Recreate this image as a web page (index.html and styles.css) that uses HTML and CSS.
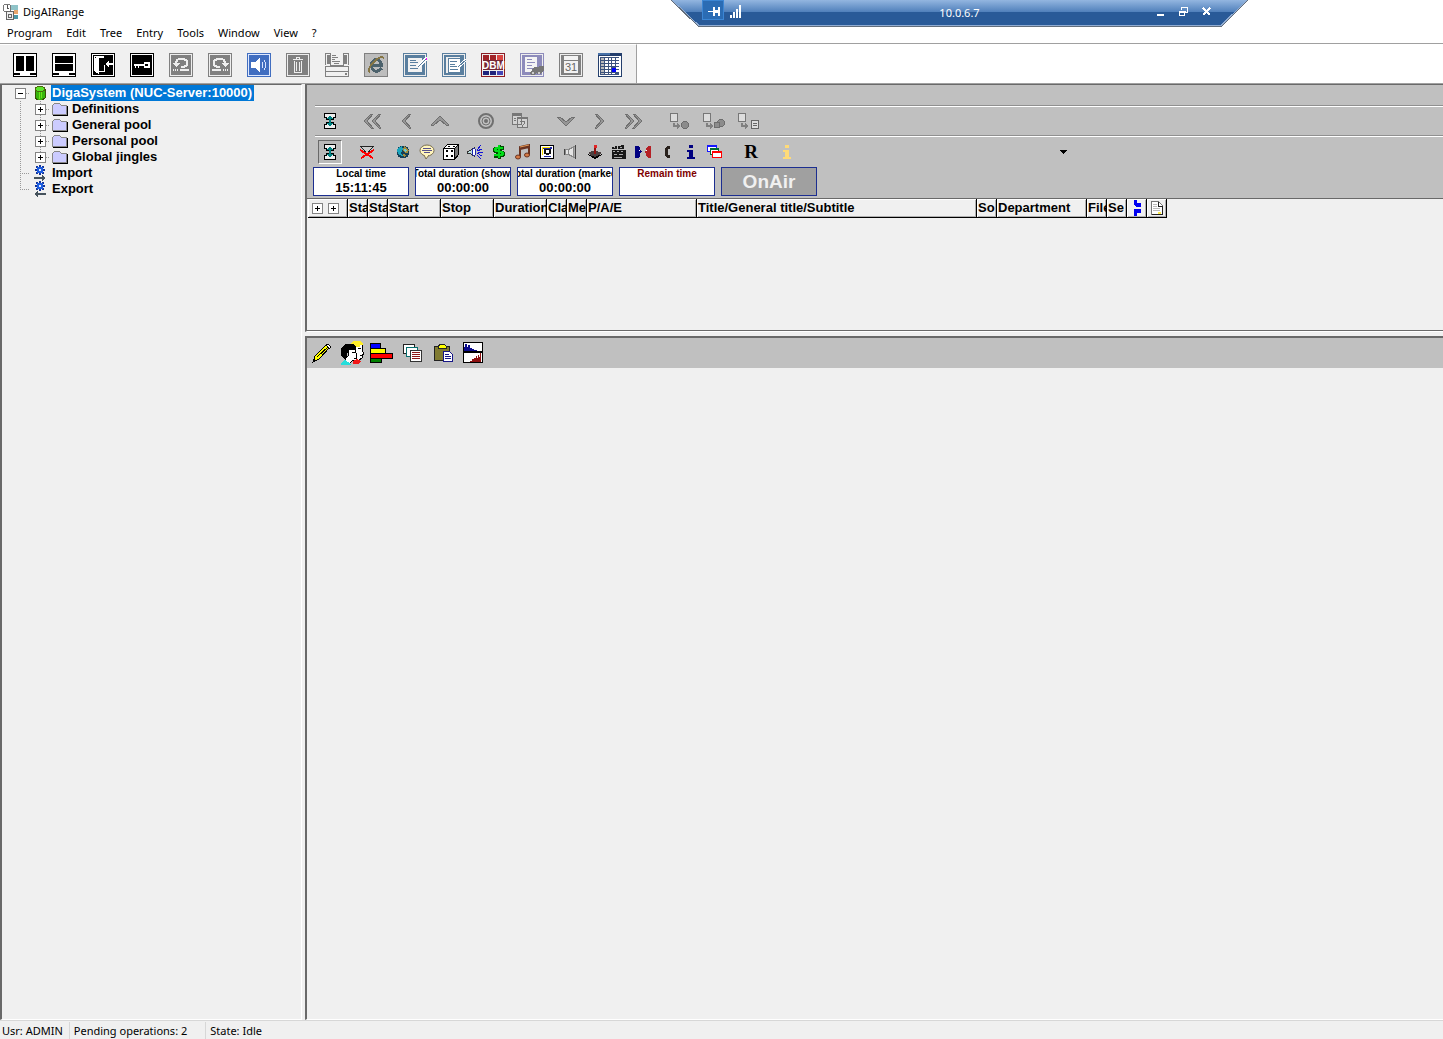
FILE: index.html
```html
<!DOCTYPE html>
<html lang="en">
<head>
<meta charset="utf-8">
<title>DigAIRange</title>
<link rel="stylesheet" href="styles.css">
</head>
<body>
<div class="app">
  <header class="titlebar">
    <svg class="app-icon" width="18" height="18" viewBox="0 0 18 18"><rect x="9" y="2" width="7" height="5" fill="#8fc3c8"/><rect x="12" y="7" width="4" height="4" fill="#e8a56c"/><rect x="12" y="12" width="4" height="4" fill="#4b97a8"/><circle cx="5" cy="5" r="4" fill="#fff" stroke="#777"/><path d="M5 2v3h2" fill="none" stroke="#555"/><path d="M4.500 8.500h7v8h-7zM6.500 11.500h3v3h-3z" fill="#eee" stroke="#666"/></svg>
    <span>DigAIRange</span>
  </header>
  <div class="remote">
    <svg class="remote-bg" width="577" height="27" viewBox="0 0 577 27"><defs><linearGradient id="blue" x1="0" y1="0" x2="0" y2="1"><stop offset="0" stop-color="#93b6e0"/><stop offset=".46" stop-color="#5080bb"/><stop offset=".46" stop-color="#295a98"/><stop offset="1" stop-color="#295a98"/></linearGradient></defs><path d="M0 0h577l-27 26H28z" fill="url(#blue)"/><path d="M1 0l27 25.500h522L576 0" fill="none" stroke="#90acd3"/><path d="M0 0l27.500 26.500h523L577 0" fill="none" stroke="#626e7c"/></svg>
    <button class="rbtn pin" aria-label="Pin"><svg width="22" height="20" viewBox="0 0 22 20"><path d="M6 11h5V7h2v3h3V7h2v9h-2v-3h-3v3h-2v-4H6z" fill="#fff"/></svg></button>
    <svg width="12" height="13" viewBox="0 0 12 13"><path d="M0 10h2v3H0zM3 7h2v6H3zM6 4h2v9H6zM9 0h2v13H9z" fill="#fff"/></svg>
    <span class="remote-host">10.0.6.7</span>
    <button class="rbtn" aria-label="Minimize"><svg width="11" height="12" viewBox="0 0 11 12"><path d="M2 8h7v2H2z" fill="#fff"/></svg></button>
    <button class="rbtn" aria-label="Restore"><svg width="11" height="12" viewBox="0 0 11 12"><path d="M3.500 4V1.500h6v5H8M1 5h6v1H1zM1.500 5.500h5v4h-5z" fill="none" stroke="#fff"/></svg></button>
    <button class="rbtn" aria-label="Close"><svg width="11" height="12" viewBox="0 0 11 12"><path d="M2 2l7 7M9 2L2 9" stroke="#fff" stroke-width="2"/></svg></button>
  </div>
  <nav class="menubar">
    <button>Program</button><button>Edit</button><button>Tree</button><button>Entry</button><button>Tools</button><button>Window</button><button>View</button><button>?</button>
  </nav>
  <div class="main-tools">
    <div class="main-tools-band">
      <button aria-label="Split vertical"><svg viewBox="0 0 24 24"><path d="M0 0h24v24H0z"/><path d="M1 1h22v22H1z" fill="#fff"/><path d="M3 3h8v15H3zM13 3h8v15h-8zM1 20h6v2H1zM17 20h6v2h-6z"/></svg></button>
      <button aria-label="Split horizontal"><svg viewBox="0 0 24 24"><path d="M0 0h24v24H0z"/><path d="M1 1h22v22H1z" fill="#fff"/><path d="M3 3h18v7H3zM3 11h18v7H3zM1 20h6v2H1zM17 20h6v2h-6z"/></svg></button>
      <button aria-label="Log off"><svg viewBox="0 0 24 24"><path d="M0 0h24v24H0z"/><path d="M1.500 1.500h21v21h-21z" stroke="#fff"/><path d="M3 3h10v2H8v13h5v-6h1v7H8v2l-5-3z" fill="#fff"/><path d="M4 4l4 2v13l-4-2z"/><path d="M3 4l5 2v13l-5-2zM22 10v2h-4v3l-4-4 4-4v3z" fill="#fff"/></svg></button>
      <button aria-label="Access key"><svg viewBox="0 0 24 24"><path d="M0 0h24v24H0z"/><path d="M1.500 1.500h21v21h-21z" stroke="#fff"/><path d="M4 11h10V9h6v6h-6v-2H9v2H8v-2H6v2H5v-2H4z" fill="#fff"/><path d="M15 11h3v2h-3z"/></svg></button>
      <button aria-label="Undo"><svg viewBox="0 0 24 24"><path d="M0 0h24v24H0z" fill="#808080"/><path d="M1.500 1.500h21v21h-21z" fill="none" stroke="#eee"/><path d="M7 10l1-3 2-1h5l3 2v4l-3 2h-3" fill="none" stroke="#eee" stroke-width="2"/><path d="M3 10h8l-4 4zM11 16h9v2h-9zM4 16h1v2H4zM6 16h1v2H6zM8 16h1v2H8z" fill="#eee"/></svg></button>
      <button aria-label="Redo"><svg viewBox="0 0 24 24"><path d="M0 0h24v24H0z" fill="#808080"/><path d="M1.500 1.500h21v21h-21z" fill="none" stroke="#eee"/><path d="M17 10l-1-3-2-1H9L6 8v4l3 2h3" fill="none" stroke="#eee" stroke-width="2"/><path d="M21 10h-8l4 4zM4 16h9v2H4zM15 16h1v2h-1zM17 16h1v2h-1zM19 16h1v2h-1z" fill="#eee"/></svg></button>
      <button aria-label="Sound"><svg viewBox="0 0 24 24"><path d="M0 0h24v24H0z" fill="#416ec0"/><path d="M1.500 1.500h21v21h-21z" fill="none" stroke="#dfe9ff"/><path d="M4 9h4l5-4v14l-5-4H4z" fill="#fff"/><path d="M15 9q2 3 0 6M17 7q4 5 0 10" fill="none" stroke="#d8e4ff"/></svg></button>
      <button aria-label="Delete"><svg viewBox="0 0 24 24"><path d="M0 0h24v24H0z" fill="#808080"/><path d="M1.500 1.500h21v21h-21z" fill="none" stroke="#eee"/><path d="M7 6.500h10M10.500 6V4.500h3V6M8.500 8v11.500h7V8M10.500 9v9M13.500 9v9" fill="none" stroke="#eee"/></svg></button>
      <button aria-label="Print"><svg viewBox="0 0 24 24"><path d="M0 0h24v24H0z" fill="#f0f0f0"/><path d="M.5 11.500V.5h5v11M23.500 11.500V.5h-5v11M5 12.500h14M.5 13.500h23v10H.5zM1 18.500h22" fill="none" stroke="#808080"/><path d="M2 2h3v9H2zM19 2h3v9h-3zM7 2h4v1H7zM7 4h6v1H7zM7 6h3v1H7zM7 8h8v1H7zM9 10h5v1H9zM20 20h2v2h-2z" fill="#808080"/></svg></button>
      <button aria-label="Browser"><svg viewBox="0 0 24 24"><path d="M.5.5h23v23H.5z" fill="#bdbdbd" stroke="#808080"/><path d="M17.500 15.500Q12 21 8.500 16t2-9q5-3 7 5H7.500" fill="none" stroke="#4c626c" stroke-width="3"/><path d="M6 20q-3-3 2-9 8-9 12-6" fill="none" stroke="#857544" stroke-width="2"/></svg></button>
      <button aria-label="Edit entry"><svg viewBox="0 0 24 24"><path d="M0 0h24v24H0z" fill="#5a7f9f"/><path d="M1.500 1.500h21v21h-21z" fill="none" stroke="#eee"/><path d="M5 5h14v14H5z" fill="#f2f2f2"/><path d="M7 7.500h6m-6 2h8m-8 3h6m-6 3h8" stroke="#5a7f9f"/><path d="M15 14l9-9" stroke="#fff" stroke-width="3"/><path d="M15 14l8-8" stroke="#5a7f9f"/><path d="M23 5h1v2h-1z" fill="#f0f"/></svg></button>
      <button aria-label="Edit entries"><svg viewBox="0 0 24 24"><path d="M0 0h24v24H0z" fill="#5a7f9f"/><path d="M1.500 1.500h21v21h-21z" fill="none" stroke="#eee"/><path d="M4 4h14v16H4z" fill="#eee"/><path d="M6.500 5.500h12v14h-12z" fill="#fff" stroke="#5a7f9f"/><path d="M8 8.500h7m-7 3h5m-5 2h7m-7 3h8" stroke="#5a7f9f"/><path d="M16 14l8-7" stroke="#fff" stroke-width="3"/><path d="M16 14l8-7" stroke="#5a7f9f"/></svg></button>
      <button aria-label="Database manager"><svg viewBox="0 0 24 24"><path d="M.5.5h23v23H.5z" fill="#eee" stroke="#8b1c24"/><path d="M2 2h6v5H2zM9 2h6v5H9z" fill="#a12328"/><path d="M16 2h6v5h-6z" fill="#db4643"/><path d="M2 7h20v10H2z" fill="#762736"/><path d="M2 18h6v4H2zM9 18h6v4H9z" fill="#20247c"/><path d="M16 18h6v4h-6z" fill="#4546b5"/><text class="dbm" x="1" y="16">DBM</text></svg></button>
      <button aria-label="Search"><svg viewBox="0 0 24 24"><path d="M0 0h24v24H0z" fill="#8d8bbb"/><path d="M1.500 1.500h21v21h-21z" fill="none" stroke="#eee"/><path d="M5 4h12v15H5z" fill="#f4f4f4"/><path d="M7 6.500h5m-5 3h8m-8 3h5m-5 3h6" stroke="#8d8bbb"/><path d="M10 20l4-6h4l2-1h4v4l-3 4h-3l-2-1-2 2h-3z" fill="#777"/><path d="M12 19h2v2h-2zM18 19h2v2h-2z" fill="#ccc"/></svg></button>
      <button aria-label="Calendar day"><svg viewBox="0 0 24 24"><path d="M0 0h24v24H0z" fill="#808080"/><path d="M1.500 1.500h21v21h-21z" fill="none" stroke="#eee"/><path d="M5 3h14v4H5zM5 8h14v12H5z" fill="#f2f2f2"/><text class="day" x="6" y="18">31</text></svg></button>
      <button aria-label="Calendar month"><svg viewBox="0 0 25 24"><path d="M0 0h25v24H0z" fill="#243f6d"/><path d="M1 3h23v20H1z" fill="#fff"/><path d="M0 0h12v2H0z" fill="#4872a8"/><path d="M2 4h20v18H2z" fill="#3c527c"/><path d="M3 5h3v2H3zM3 8h3v2H3zM3 11h3v2H3zM3 14h3v2H3zM3 17h3v2H3zM3 20h3v1H3z" fill="#bbb"/><path d="M7 5h3v2H7zM11 5h3v2h-3zM15 5h3v2h-3zM19 5h3v2h-3zM7 8h3v2H7zM11 8h3v2h-3zM15 8h3v2h-3zM19 8h3v2h-3zM7 11h3v2H7zM11 11h3v2h-3zM15 11h3v2h-3zM19 11h3v2h-3zM7 14h3v2H7zM11 14h3v2h-3zM19 14h3v2h-3zM7 17h3v2H7zM11 17h3v2h-3zM19 17h3v2h-3zM7 20h3v1H7zM11 20h3v1h-3zM15 20h3v1h-3z" fill="#fff"/><path d="M15 15h4v4h-4z" fill="#00f"/></svg></button>
    </div>
  </div>

  <div class="workspace">
    <aside class="tree-pane">
      <ul class="tree">
        <li>
          <div class="node"><span class="cell root-cell"><button class="expander minus" aria-label="Collapse"></button></span><span class="cell"><svg width="12" height="14" viewBox="0 0 12 14"><path d="M1 3v9l3 2h4l3-2V3z" fill="#38b50c" stroke="#385006"/><path d="M5 5v8M7 5v7" stroke="#6fe31c"/><ellipse cx="6" cy="3" rx="5" ry="2.500" fill="#5be52b" stroke="#4a680a"/></svg></span><span class="label selected">DigaSystem (NUC-Server:10000)</span></div>
          <ul>
            <li class="node"><span class="cell trunk"></span><span class="cell trunk branch"><button class="expander" aria-label="Expand"></button></span><span class="cell"><svg width="16" height="13" viewBox="0 0 16 13"><path d="M.5 11.500v-9l2-2h5l2 2h5v9z" fill="#ccccff" stroke="#888"/><path d="M1 12.500h14.500V3" fill="none" stroke="#000"/></svg></span><span class="label">Definitions</span></li>
            <li class="node"><span class="cell trunk"></span><span class="cell trunk branch"><button class="expander" aria-label="Expand"></button></span><span class="cell"><svg width="16" height="13" viewBox="0 0 16 13"><path d="M.5 11.500v-9l2-2h5l2 2h5v9z" fill="#ccccff" stroke="#888"/><path d="M1 12.500h14.500V3" fill="none" stroke="#000"/></svg></span><span class="label">General pool</span></li>
            <li class="node"><span class="cell trunk"></span><span class="cell trunk branch"><button class="expander" aria-label="Expand"></button></span><span class="cell"><svg width="16" height="13" viewBox="0 0 16 13"><path d="M.5 11.500v-9l2-2h5l2 2h5v9z" fill="#ccccff" stroke="#888"/><path d="M1 12.500h14.500V3" fill="none" stroke="#000"/></svg></span><span class="label">Personal pool</span></li>
            <li class="node"><span class="cell trunk"></span><span class="cell trunk branch last"><button class="expander" aria-label="Expand"></button></span><span class="cell"><svg width="16" height="13" viewBox="0 0 16 13"><path d="M.5 11.500v-9l2-2h5l2 2h5v9z" fill="#ccccff" stroke="#888"/><path d="M1 12.500h14.500V3" fill="none" stroke="#000"/></svg></span><span class="label">Global jingles</span></li>
          </ul>
        </li>
        <li class="node"><span class="cell trunk branch"></span><span class="cell"><svg width="12" height="16" viewBox="0 0 12 16"><path d="M5 0h2v10H5zM1 4h10v2H1zM2 1h2v2H2zM8 1h2v2H8zM2 7h2v2H2zM8 7h2v2H8z" fill="#12349a"/><path d="M3 2h6v6H3z" fill="#1c5ce0"/><path d="M5 4h2v2H5z" fill="#e4f0ff"/><path d="M0 12h8v-2l4 3-4 3v-2H0z" fill="#45525c"/></svg></span><span class="label">Import</span></li>
        <li class="node"><span class="cell trunk branch last"></span><span class="cell"><svg width="12" height="16" viewBox="0 0 12 16"><path d="M5 0h2v10H5zM1 4h10v2H1zM2 1h2v2H2zM8 1h2v2H8zM2 7h2v2H2zM8 7h2v2H8z" fill="#12349a"/><path d="M3 2h6v6H3z" fill="#1c5ce0"/><path d="M5 4h2v2H5z" fill="#e4f0ff"/><path d="M12 12H4v-2l-4 3 4 3v-2h8z" fill="#45525c"/></svg></span><span class="label">Export</span></li>
      </ul>
    </aside>

    <main class="content">
      <section class="pane show-pane">
        <div class="caption-strip"></div>
        <div class="tool-row nav-row">
          <div class="group"><button class="small" aria-label="Fit"><svg width="12" height="16" viewBox="0 0 12 16"><path d="M.5.500h11v4h-2v2h-7v-2h-2zM.5 15.500h11v-4h-2v-2h-7v2h-2z" fill="#eee" stroke="#000"/><path d="M5 3h2v10H5zM4 4h4v1H4zM3 5h6v1H3zM3 10h6v1H3zM4 11h4v1H4z" fill="#008080"/></svg></button></div>
          <div class="group">
            <button aria-label="First"><svg width="18" height="16" viewBox="0 0 18 16"><path d="M8 1h2L4 8l6 7H8L1 8zM16 1h2l-6 7 6 7h-2L9 8z" class="dim"/></svg></button>
            <button aria-label="Previous"><svg width="10" height="16" viewBox="0 0 10 16"><path d="M8 1h2L4 8l6 7H8L1 8z" class="dim"/></svg></button>
            <button aria-label="Up"><svg width="18" height="10" viewBox="0 0 18 10"><path d="M9 0l9 9h-3L9 4 3 9H0z" class="dim"/></svg></button>
          </div>
          <div class="group">
            <button aria-label="Target"><svg class="smooth" width="16" height="16" viewBox="0 0 16 16"><circle cx="8" cy="8" r="7" fill="none" stroke="#707070" stroke-width="2"/><circle cx="8" cy="8" r="4" fill="none" stroke="#707070" stroke-width="1"/><circle cx="8" cy="8" r="2" fill="#707070"/></svg></button>
            <button aria-label="Date"><svg width="16" height="16" viewBox="0 0 16 16"><path d="M.5.500h9v11h-9zM5.500 4.500h10v10h-10z" fill="#d2d2d2" stroke="#777"/><path d="M0 0h10v3H0zM5 4h11v2H5z" fill="#777"/><path d="M8 8.500h4.500v2l-2 2v1M2 5.500h2m-2 2h2" fill="none" stroke="#777"/></svg></button>
          </div>
          <div class="group">
            <button aria-label="Down"><svg width="18" height="10" viewBox="0 0 18 10"><path d="M9 10l9-9h-3L9 6 3 1H0z" class="dim"/></svg></button>
            <button aria-label="Next"><svg width="10" height="16" viewBox="0 0 10 16"><path d="M2 1H0l6 7-6 7h2l7-7z" class="dim"/></svg></button>
            <button aria-label="Last"><svg width="18" height="16" viewBox="0 0 18 16"><path d="M2 1H0l6 7-6 7h2l7-7zM10 1H8l6 7-6 7h2l7-7z" class="dim"/></svg></button>
          </div>
          <div class="group">
            <button aria-label="Insert one"><svg width="20" height="16" viewBox="0 0 20 16"><path d="M.5.500h7v8h-7z" fill="#ddd" stroke="#777"/><path d="M3 10v4h4v2l3-3-3-3v2H5v-2z" fill="#808080"/><circle cx="15" cy="12" r="3.500" fill="#8c8c8c" stroke="#6d6d6d"/></svg></button>
            <button aria-label="Insert several"><svg width="22" height="16" viewBox="0 0 22 16"><path d="M.5.500h7v8h-7z" fill="#ddd" stroke="#777"/><path d="M3 10v4h4v2l3-3-3-3v2H5v-2z" fill="#808080"/><circle cx="18" cy="10" r="3.500" fill="#8c8c8c" stroke="#6d6d6d"/><circle cx="14" cy="12" r="3" fill="#8c8c8c" stroke="#6d6d6d"/></svg></button>
            <button aria-label="Insert list"><svg width="21" height="16" viewBox="0 0 21 16"><path d="M.5.500h7v8h-7z" fill="#ddd" stroke="#777"/><path d="M3 10v4h4v2l3-3-3-3v2H5v-2z" fill="#808080"/><path d="M13.500 7.500h7v8h-7z" fill="#ddd" stroke="#666"/><path d="M15 10.500h4m-4 2h4" stroke="#666"/></svg></button>
          </div>
        </div>
        <div class="tool-row filter-row">
          <div class="group"><button class="small pressed" aria-label="Fit"><svg width="12" height="16" viewBox="0 0 12 16"><path d="M.5.500h11v4h-2v2h-7v-2h-2zM.5 15.500h11v-4h-2v-2h-7v2h-2z" fill="#eee" stroke="#000"/><path d="M5 3h2v10H5zM4 4h4v1H4zM3 5h6v1H3zM3 10h6v1H3zM4 11h4v1H4z" fill="#008080"/></svg></button></div>
          <div class="group"><button class="small" aria-label="Clear filter"><svg width="14" height="16" viewBox="0 0 14 16"><path d="M1 2.500h12L8.500 8v3h-3V8z" fill="#ccc" stroke="#222"/><path d="M0 6l13 8M14 6L1 14" stroke="#f00" stroke-width="2"/></svg></button></div>
          <div class="group">
            <button class="small" aria-label="World"><svg width="14" height="14" viewBox="0 0 14 14"><circle cx="7" cy="7" r="6.500" fill="#154058"/><path d="M2 3l4-2 1 3-2 4 2 3-4-1-2-4z" fill="#1aa3bb"/><path d="M8 1l5 4-1 3H9L7 6zM7 9l3 1-2 3z" fill="#a48c39"/><path d="M8 4l3 1-2 2z" fill="#6bcad6"/></svg></button>
            <button class="small" aria-label="Speech"><svg class="smooth" width="16" height="16" viewBox="0 0 16 16"><ellipse cx="8" cy="6.500" rx="7" ry="5.500" fill="#fff5bd" stroke="#796d51"/><path d="M5 11l2 4 3-4" fill="#fff5bd" stroke="#796d51"/><path d="M4 4.500h8M3 6.500h10M5 8.500h6" stroke="#56508c"/></svg></button>
            <button class="small" aria-label="Dice"><svg width="16" height="16" viewBox="0 0 16 16"><path d="M.5 4.500l4-4h11v10l-4 5H.5z" fill="#fff" stroke="#000"/><path d="M12 5l3-4v9l-3 4z" fill="#777"/><path d="M1 4.500h10.500V15M11.500 4.500l4-4" fill="none" stroke="#000"/><path d="M3 6h2v2H3zM8 6h2v2H8zM3 11h2v2H3zM8 11h2v2H8zM5 2h2v1H5zM10 2h2v1h-2z"/></svg></button>
            <button class="small" aria-label="Announcement"><svg width="16" height="14" viewBox="0 0 16 14"><path d="M0 6h2l5-3v8L2 8H0z" fill="#bdd" stroke="#333"/><ellipse cx="7" cy="7" rx="1.500" ry="4" fill="#fff" stroke="#222ab0"/><path d="M10 5l4-5M10 6l5-2M11 7h5M10 8l5 3M10 10l4 4" stroke="#1010d8"/></svg></button>
            <button class="small" aria-label="Commercial"><svg width="12" height="16" viewBox="0 0 12 16"><path d="M5 1h3v1h3v4H9v1h2v1h1v4h-1v1H8v2H5v-1H1v-4h2V9H1V8H0V4h1V3h4z" fill="#004b00"/><path d="M5 1h2v2h3v2H7v2h3v1h1v3h-1v1H7v2H5v-2H1v-2h4V8H2V7H1V4h1V3h3z" fill="#00dc18"/><path d="M4 5h1v1H4zM7 9h1v1H7z" fill="#004b00"/></svg></button>
            <button class="small" aria-label="Music"><svg class="smooth" width="16" height="16" viewBox="0 0 16 16"><path d="M5 13V3l9-2v10M5 5l9-2" fill="none" stroke="#693321" stroke-width="2"/><path d="M5 3l9-2" stroke="#e69a56"/><ellipse cx="3" cy="13" rx="2.500" ry="2" fill="#d67b45" stroke="#693321"/><ellipse cx="12" cy="11" rx="2.500" ry="2" fill="#d67b45" stroke="#693321"/></svg></button>
            <button class="small" aria-label="Video"><svg width="14" height="14" viewBox="0 0 14 14"><path d="M0 0h14v14H0z"/><path d="M1 1h12v12H1z" fill="#fff"/><path d="M2 2h10v2H2z" fill="#1e28a0"/><path d="M2 2h8v1H3v7H2z" fill="#ffe000"/><path d="M4 4h7v5H9v1H6V9H4z" fill="#111"/><path d="M6 5h3v3H6z" fill="#fff"/><path d="M4 11h7v1H4z" fill="#1e28a0"/></svg></button>
            <button class="small" aria-label="Speaker"><svg width="14" height="16" viewBox="0 0 14 16"><path d="M1 5h3l8-4v14L4 11H1z" fill="#888"/><path d="M2 6h2v4H2zM5 6l4-2v8L5 10z" fill="#e4e4e4"/><path d="M11 1h1v14h-1zM0 5h1v6H0z" fill="#444"/><path d="M10 3v10" stroke="#aaa"/></svg></button>
            <button class="small" aria-label="Joystick"><svg width="14" height="16" viewBox="0 0 14 16"><path d="M0 9l7-3 7 3-7 5z" fill="#4a4040"/><path d="M0 10l7 3 7-3v1l-7 4-7-4z" fill="#000"/><path d="M7 3v7" stroke="#8e1310" stroke-width="2"/><path d="M6 1h3v3H6z" fill="#e12525"/></svg></button>
            <button class="small" aria-label="Camera"><svg width="14" height="14" viewBox="0 0 14 14"><path d="M0 5h14v9H0zM0 2l5-1v3H0zM6 1l6-1v4H6z" fill="#181818"/><path d="M1 6h2v1H1zM5 6h2v1H5zM9 6h2v1H9zM2 9h3v1H2zM7 9h4v1H7zM2 12h8v1H2zM2 2h1v1H2zM8 2h2v1H8z" fill="#aaa"/></svg></button>
            <button class="small" aria-label="Interview"><svg width="16" height="14" viewBox="0 0 16 14"><path d="M0 1h3l2 2v2l2 2-2 1v3l-2 2H0z" fill="#000080"/><path d="M16 1h-3l-2 2v2L9 7l2 1v3l2 2h3z" fill="#b52025"/><path d="M4 5h1v1H4zM11 5h1v1h-1z" fill="#fff"/></svg></button>
            <button class="small" aria-label="Phone"><svg width="6" height="14" viewBox="0 0 6 14"><path d="M3 1h3v3H4v6h2v3H3l-2-3V4z" fill="#28211c"/></svg></button>
            <button class="small" aria-label="Info"><svg width="10" height="14" viewBox="0 0 10 14"><path d="M3 0h4v3H3zM1 5h6v7h2v2H1v-2h2V7H1z" fill="#000080"/></svg></button>
            <button class="small" aria-label="Windows"><svg width="16" height="14" viewBox="0 0 16 14"><path d="M.5.500h9v6h-9z" fill="#fff" stroke="#1616ff"/><path d="M0 0h10v2H0z" fill="#1616ff"/><path d="M3.500 3.500h8v6h-8z" fill="#fff" stroke="#006c32"/><path d="M3 3h9v2H3z" fill="#006c32"/><path d="M5.500 6.500h9v6h-9z" fill="#fff" stroke="#f00"/><path d="M5 6h10v2H5z" fill="#f00"/></svg></button>
          </div>
          <div class="group"><button class="small letter">R</button></div>
          <div class="group"><button class="small" aria-label="Details"><svg width="10" height="14" viewBox="0 0 10 14"><path d="M3 0h4v3H3zM1 5h6v7h2v2H1v-2h2V7H1z" fill="#ffdb78"/></svg></button></div>
          <div class="combo"><select aria-label="Filter"><option></option></select><svg width="8" height="4" viewBox="0 0 8 4"><path d="M0 0h8L4 4z"/></svg></div>
        </div>
        <div class="clocks">
          <div class="clock"><span>Local time</span><strong>15:11:45</strong></div>
          <div class="clock"><span>Total duration (show)</span><strong>00:00:00</strong></div>
          <div class="clock"><span>Total duration (marked)</span><strong>00:00:00</strong></div>
          <div class="clock remain"><span>Remain time</span></div>
          <button class="onair">OnAir</button>
        </div>
        <div class="list-area">
          <table class="list-head">
            <colgroup><col class="w40"><col class="w20"><col class="w20"><col class="w53"><col class="w53"><col class="w53"><col class="w20"><col class="w20"><col class="w110"><col class="w280"><col class="w20"><col class="w90"><col class="w20"><col class="w20"><col class="w20"><col class="w20"></colgroup>
            <thead><tr>
              <th><div class="expanders"><button class="expander" aria-label="Expand all"></button><button class="expander" aria-label="Expand level"></button></div></th>
              <th>Sta</th><th>Sta</th><th>Start</th><th>Stop</th><th>Duration</th><th>Cla</th><th>Me</th><th>P/A/E</th><th>Title/General title/Subtitle</th><th>So</th><th>Department</th><th>File</th><th>Se</th>
              <th aria-label="Link"><svg width="8" height="16" viewBox="0 0 8 16"><path d="M1 0h3v3h4v4H3L1 5zM1 9h7v4H4v3H1z" fill="#0000f0"/></svg></th>
              <th aria-label="Document"><svg width="12" height="14" viewBox="0 0 12 14"><path d="M.5.500h7l4 4v9H.500z" fill="#fff" stroke="#777"/><path d="M7.500 1v4h4v8.500H1" fill="none" stroke="#222"/><path d="M2 3.500h4M2 5.500h4M2 7.500h7M2 9.500h7" stroke="#bbb"/><path d="M7 11h3v2H7z" fill="#ffee4a"/></svg></th>
            </tr></thead>
          </table>
        </div>
      </section>

      <section class="pane detail-pane">
        <div class="detail-tools">
          <button aria-label="Edit"><svg width="20" height="20" viewBox="0 0 20 20"><path d="M1 19l2-6L15 1l3 3L7 16z" fill="#ff0" stroke="#000"/><path d="M14 2l2-1 3 3-2 2z" fill="#fff" stroke="#000"/><path d="M5 14L16 4" stroke="#000"/><path d="M2 16l2 2-3 1z"/></svg></button>
          <button aria-label="Persons"><svg width="24" height="24" viewBox="0 0 24 24"><path d="M13 2h8l2 3-1 4 2 4-2 1v3l-3 2h-5z" fill="#fff" stroke="#000"/><path d="M11 2l3-2h6l3 2v2h-3v2h-4l-2-2h-3z" fill="#ffee28"/><path d="M1 7l4-4h8l3 3v3H9l-2 4v5H4l-3-3z"/><path d="M9 8h6l1 4 1 2-1 2v3l-4 1-2 2H5v-4l3-3z" fill="#fff" stroke="#000"/><path d="M1 24v-2l4-3 5 3 1 2z" fill="#26dedb"/><path d="M13 20l4-2 4 2-2 3h-6z" fill="#f31919"/><path d="M18 7h3v1h-3zM12 11h3v1h-3zM14 17h2v1h-2zM20 14h2v1h-2z"/></svg></button>
          <button aria-label="Timeline"><svg width="24" height="22" viewBox="0 0 24 22"><path d="M.500 1.500h10v5H.500z" fill="#00f" stroke="#000"/><path d="M.500 6.500h15v5H.500z" fill="#ff0" stroke="#000"/><path d="M.500 11.500h22v5H.500z" fill="#f00" stroke="#000"/><path d="M.500 16.500h11v4H.500z" fill="#008000" stroke="#000"/></svg></button>
          <button aria-label="Copy"><svg width="19" height="18" viewBox="0 0 19 18"><path d="M.5.500h11v9H.5z" fill="#fff" stroke="#222"/><path d="M3.500 3.500h11v9h-11z" fill="#fff" stroke="#087070"/><path d="M7.500 6.500h11v11h-11z" fill="#fff" stroke="#333"/><path d="M9 8.500h8M9 10.500h8M9 12.500h8M9 14.500h8" stroke="#8e1717"/></svg></button>
          <button class="apart" aria-label="Paste"><svg width="20" height="20" viewBox="0 0 20 20"><path d="M.5 3.500h15v14H.5z" fill="#807b31" stroke="#222"/><path d="M4 5V3l3-2h3l2 2v2z" fill="#ff0" stroke="#222"/><path d="M9.500 8.500h6l3 3v7h-9z" fill="#fff" stroke="#171788"/><path d="M11 11.500h4m-4 2h6m-6 2h6" stroke="#171788"/></svg></button>
          <button aria-label="Waveform"><svg width="20" height="22" viewBox="0 0 20 22"><path d="M.500.500h19v20H.500z" fill="#fff" stroke="#000"/><path d="M0 10h20" stroke="#000" stroke-width="2"/><path d="M1 9V5h1V2h2v3h1V3h2v3h2v1h2v1h3v1z" fill="#0b0b8c"/><path d="M7 20v-1h2v-2h2v-1h2v-2h1v2h1v-3h1v2h1v-4h1v9z" fill="#8d1010"/></svg></button>
        </div>
      </section>
    </main>
  </div>

  <footer class="statusbar"><span>Usr: ADMIN</span><span>Pending operations: 2</span><span>State: Idle</span></footer>
</div>
</body>
</html>
```

FILE: styles.css
```css
* { box-sizing: border-box; }
body { margin: 0; background: #f0f0f0; color: #000; font: 11px/16px "Noto Sans", sans-serif; }
button { border: 0; padding: 0; margin: 0; background: none; font: inherit; color: inherit; display: flex; align-items: center; justify-content: center; }
svg { display: block; flex: none; shape-rendering: crispEdges; }
.smooth { shape-rendering: auto; }
ul { list-style: none; margin: 0; padding: 0; }

.app { position: relative; display: flex; flex-direction: column; min-height: 100vh; overflow: hidden; }

.titlebar { display: flex; align-items: center; gap: 3px; height: 24px; padding-left: 2px; background: #fff; }
.menubar { display: flex; height: 19px; padding-bottom: 1px; background: #fff; }
.menubar button { padding: 0 7px; }

/* Remote session bar floating over the title bar */
.remote { position: absolute; z-index: 1; top: 0; left: 671px; width: 577px; height: 27px; display: flex; align-items: center; padding: 0 36px 4px 31px; color: #fff; }
.remote-bg { position: absolute; inset: 0; z-index: -1; }
.pin { width: 22px; height: 20px; margin: 0 6px 4px 0; background: #2b6cb4; outline: 1px solid #3c86d4; outline-offset: -1px; }
.rbtn + .rbtn { margin-left: 12px; }
.remote-host { flex: 1; padding: 2px 0 0 22px; text-align: center; }

.main-tools { height: 41px; border-top: 1px solid #a0a0a0; border-bottom: 1px solid #a0a0a0; background: #fff; display: flex; }
.main-tools-band { display: flex; align-items: center; padding: 1px 7px 0 5px; background: #f0f0f0; border-top: 1px solid #fff; border-right: 1px solid #a0a0a0; }
.main-tools-band button { width: 39px; height: 24px; }
.main-tools-band svg { height: 24px; width: 24px; }
.dbm { font: bold 10px "Liberation Sans", Arial, sans-serif; fill: #fff; }
.day { font: 11px "Liberation Sans", Arial, sans-serif; fill: #666; }

.workspace { flex: 1; display: flex; gap: 3px; }

.tree-pane { width: 302px; border-left: 2px solid #696969; border-top: 1px solid #696969; border-right: 1px solid #fff; border-bottom: 1px solid #fff; font: bold 13px/16px "Liberation Sans", Arial, sans-serif; }
.tree { padding-left: 8px; }
.node { display: flex; height: 16px; }
.cell { width: 20px; display: flex; align-items: center; justify-content: center; }
.trunk { background: repeating-linear-gradient(#999 0 1px, transparent 1px 2px) 10px 0 / 1px 16px no-repeat; }
.branch { background: repeating-linear-gradient(#999 0 1px, transparent 1px 2px) 10px 0 / 1px 16px no-repeat, repeating-linear-gradient(90deg, #999 0 1px, transparent 1px 2px) 10px 8px / 10px 1px no-repeat; }
.branch.last { background-size: 1px 8px, 10px 1px; }
.root-cell { background: repeating-linear-gradient(90deg, #999 0 1px, transparent 1px 2px) 10px 8px / 10px 1px no-repeat; }
.label { margin-left: 1px; padding: 0 2px 0 1px; white-space: nowrap; }
.selected { background: #0078d7; color: #fff; }
.expander { width: 11px; height: 11px; border: 1px solid #848484; background: linear-gradient(#000 0 0) 2px 4px / 5px 1px no-repeat, linear-gradient(#000 0 0) 4px 2px / 1px 5px no-repeat, #fff; }
.expander.minus { background: linear-gradient(#000 0 0) 2px 4px / 5px 1px no-repeat, #fff; }

.content { flex: 1; min-width: 0; display: flex; flex-direction: column; gap: 4px; }
.pane { border-left: 2px solid #696969; border-top: 1px solid #696969; border-bottom: 1px solid #fff; }
.show-pane { height: 248px; background: #c0c0c0; display: flex; flex-direction: column; box-shadow: inset 0 -1px #696969; }
.caption-strip { height: 20px; }
.tool-row { display: flex; align-items: center; gap: 12px; margin-left: 8px; padding-left: 3px; border-top: 1px solid #909090; box-shadow: inset 0 1px #fff; height: 30px; }
.filter-row { height: 32px; }
.group { display: flex; }
.group button { width: 34px; height: 24px; }
.group .small { width: 24px; }
.nav-row .group:first-child, .filter-row .group:first-child { margin-right: 1px; }
.dim { fill: #969696; stroke: #707070; }
.group .pressed { background: #b9b9b9; border: 1px solid; border-color: #696969 #fff #fff #696969; }
.group .letter { font: bold 19px/24px "Liberation Serif", serif; }
.combo { position: relative; width: 260px; }
.combo select { width: 100%; height: 22px; border: 0; background: transparent; appearance: none; }
.combo svg { position: absolute; right: 4px; top: 9px; }

.clocks { display: flex; gap: 6px; padding: 0 6px; height: 31px; }
.clock, .onair { width: 96px; height: 29px; border: 1px solid #1c2e90; overflow: hidden; }
.clock { display: flex; flex-direction: column; align-items: center; background: #fff; white-space: nowrap; font: bold 10px/12px "Liberation Sans", Arial, sans-serif; }
.clock strong { font-size: 13px; line-height: 15px; }
.clock.remain { color: #800000; }
.onair { background: #a0a0a0; color: #f0f0f0; font: bold 19px/28px "Liberation Sans", Arial, sans-serif; }

.list-area { flex: 1; background: #f0f0f0; border-top: 1px solid #696969; margin-bottom: 1px; padding-left: 1px; }
.list-head { table-layout: fixed; width: 859px; border-collapse: separate; border-spacing: 0; font: bold 13px/16px "Liberation Sans", Arial, sans-serif; }
.list-head th { height: 19px; padding: 0 0 0 1px; overflow: hidden; white-space: nowrap; text-align: left; border-right: 1px solid #000; border-bottom: 1px solid #000; box-shadow: inset 1px 1px #fff, inset -1px -1px #b0b0b0; }
.list-head th svg { margin: 0 auto; }
.expanders { display: flex; gap: 5px; padding-left: 3px; }
.w20 { width: 20px; }
.w40 { width: 40px; }
.w53 { width: 53px; }
.w90 { width: 90px; }
.w110 { width: 110px; }
.w280 { width: 280px; }

.detail-pane { flex: 1; border-top: 2px solid #696969; }
.detail-tools { display: flex; align-items: center; height: 30px; background: #c0c0c0; }
.detail-tools button { width: 30px; height: 30px; }
.detail-tools .apart { width: 28px; margin-left: 3px; }

.statusbar { display: flex; align-items: flex-end; height: 19px; border-top: 1px solid #d7d7d7; }
.statusbar span { padding: 1px 6px 0 4px; border-right: 1px solid #d7d7d7; }
.statusbar span:first-child { padding-left: 2px; }
.statusbar span:nth-child(2) { padding-right: 18px; }
.statusbar span:last-child { border: 0; }
```
